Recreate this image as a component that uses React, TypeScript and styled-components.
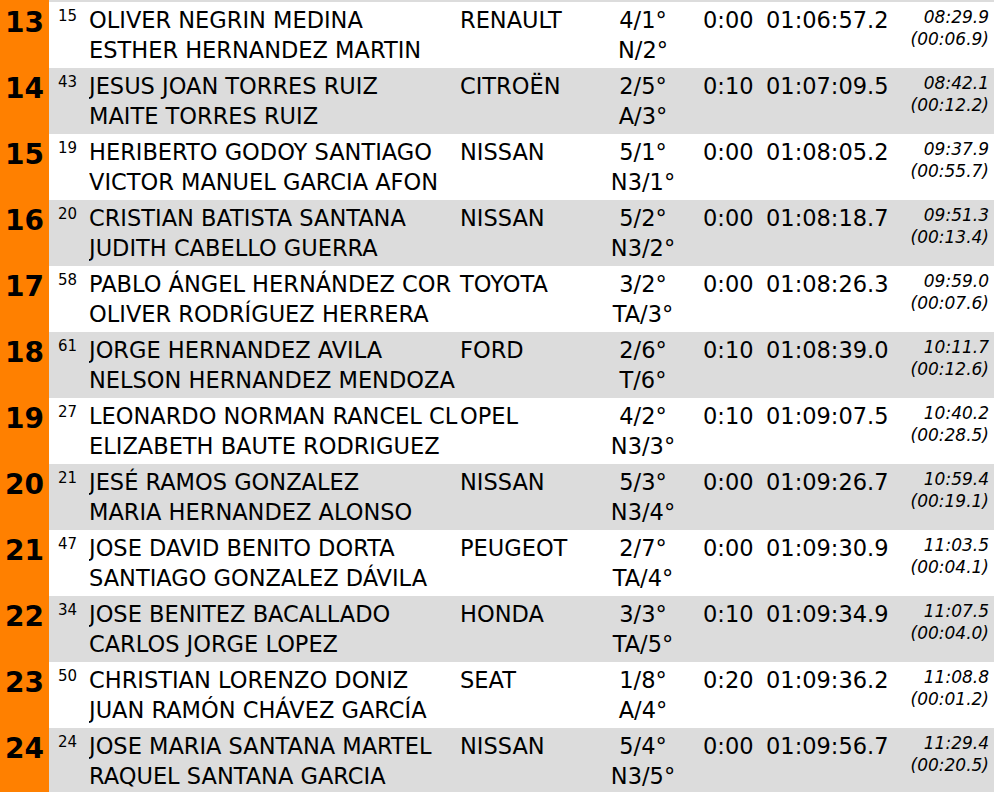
import styled, { createGlobalStyle } from 'styled-components';

type Entry = {
  pos: number;
  dorsal: number;
  driver: string;
  codriver: string;
  car: string;
  classAbs: string;
  classGroup: string;
  penalty: string;
  time: string;
  diff: string;
  prev: string;
};

const entries: Entry[] = [
  { pos: 13, dorsal: 15, driver: 'OLIVER NEGRIN MEDINA', codriver: 'ESTHER HERNANDEZ MARTIN', car: 'RENAULT', classAbs: '4/1°', classGroup: 'N/2°', penalty: '0:00', time: '01:06:57.2', diff: '08:29.9', prev: '(00:06.9)' },
  { pos: 14, dorsal: 43, driver: 'JESUS JOAN TORRES RUIZ', codriver: 'MAITE TORRES RUIZ', car: 'CITROËN', classAbs: '2/5°', classGroup: 'A/3°', penalty: '0:10', time: '01:07:09.5', diff: '08:42.1', prev: '(00:12.2)' },
  { pos: 15, dorsal: 19, driver: 'HERIBERTO GODOY SANTIAGO', codriver: 'VICTOR MANUEL GARCIA AFON', car: 'NISSAN', classAbs: '5/1°', classGroup: 'N3/1°', penalty: '0:00', time: '01:08:05.2', diff: '09:37.9', prev: '(00:55.7)' },
  { pos: 16, dorsal: 20, driver: 'CRISTIAN BATISTA SANTANA', codriver: 'JUDITH CABELLO GUERRA', car: 'NISSAN', classAbs: '5/2°', classGroup: 'N3/2°', penalty: '0:00', time: '01:08:18.7', diff: '09:51.3', prev: '(00:13.4)' },
  { pos: 17, dorsal: 58, driver: 'PABLO ÁNGEL HERNÁNDEZ COR', codriver: 'OLIVER RODRÍGUEZ HERRERA', car: 'TOYOTA', classAbs: '3/2°', classGroup: 'TA/3°', penalty: '0:00', time: '01:08:26.3', diff: '09:59.0', prev: '(00:07.6)' },
  { pos: 18, dorsal: 61, driver: 'JORGE HERNANDEZ AVILA', codriver: 'NELSON HERNANDEZ MENDOZA', car: 'FORD', classAbs: '2/6°', classGroup: 'T/6°', penalty: '0:10', time: '01:08:39.0', diff: '10:11.7', prev: '(00:12.6)' },
  { pos: 19, dorsal: 27, driver: 'LEONARDO NORMAN RANCEL CL', codriver: 'ELIZABETH BAUTE RODRIGUEZ', car: 'OPEL', classAbs: '4/2°', classGroup: 'N3/3°', penalty: '0:10', time: '01:09:07.5', diff: '10:40.2', prev: '(00:28.5)' },
  { pos: 20, dorsal: 21, driver: 'JESÉ RAMOS GONZALEZ', codriver: 'MARIA HERNANDEZ ALONSO', car: 'NISSAN', classAbs: '5/3°', classGroup: 'N3/4°', penalty: '0:00', time: '01:09:26.7', diff: '10:59.4', prev: '(00:19.1)' },
  { pos: 21, dorsal: 47, driver: 'JOSE DAVID BENITO DORTA', codriver: 'SANTIAGO GONZALEZ DÁVILA', car: 'PEUGEOT', classAbs: '2/7°', classGroup: 'TA/4°', penalty: '0:00', time: '01:09:30.9', diff: '11:03.5', prev: '(00:04.1)' },
  { pos: 22, dorsal: 34, driver: 'JOSE BENITEZ BACALLADO', codriver: 'CARLOS JORGE LOPEZ', car: 'HONDA', classAbs: '3/3°', classGroup: 'TA/5°', penalty: '0:10', time: '01:09:34.9', diff: '11:07.5', prev: '(00:04.0)' },
  { pos: 23, dorsal: 50, driver: 'CHRISTIAN LORENZO DONIZ', codriver: 'JUAN RAMÓN CHÁVEZ GARCÍA', car: 'SEAT', classAbs: '1/8°', classGroup: 'A/4°', penalty: '0:20', time: '01:09:36.2', diff: '11:08.8', prev: '(00:01.2)' },
  { pos: 24, dorsal: 24, driver: 'JOSE MARIA SANTANA MARTEL', codriver: 'RAQUEL SANTANA GARCIA', car: 'NISSAN', classAbs: '5/4°', classGroup: 'N3/5°', penalty: '0:00', time: '01:09:56.7', diff: '11:29.4', prev: '(00:20.5)' },
];

export default function App() {
  return (
    <>
      <GlobalStyle />
      <Results>
        <TopStrip>
          <PosCell />
          <StripFill />
        </TopStrip>
        {entries.map((e) => (
          <Row key={e.pos} $shaded={e.pos % 2 === 0}>
            <PosCell>{e.pos}</PosCell>
            <Dorsal>{e.dorsal}</Dorsal>
            <Crew>
              <div>{e.driver}</div>
              <div>{e.codriver}</div>
            </Crew>
            <Car>{e.car}</Car>
            <ClassCell>
              <div>{e.classAbs}</div>
              <div>{e.classGroup}</div>
            </ClassCell>
            <Penalty>{e.penalty}</Penalty>
            <Time>{e.time}</Time>
            <Diff>
              <div>{e.diff}</div>
              <div>{e.prev}</div>
            </Diff>
          </Row>
        ))}
      </Results>
    </>
  );
}

const GlobalStyle = createGlobalStyle`
  html, body {
    margin: 0;
    padding: 0;
    background: #ffffff;
    overflow: hidden;
  }

  body {
    font-family: "DejaVu Sans", Verdana, sans-serif;
    color: #000000;
  }
`;

const Results = styled.div`
  width: 994px;
  display: flex;
  flex-direction: column;
`;

const TopStrip = styled.div`
  display: grid;
  grid-template-columns: 49px 1fr;
  height: 2px;
`;

const StripFill = styled.div`
  background-color: #dcdcdc;
`;

const Row = styled.div<{ $shaded: boolean }>`
  display: grid;
  grid-template-columns: 49px 40px 371px 133px 100px 73px 127px 1fr;
  height: 66px;
  background-color: ${(p) => (p.$shaded ? '#dcdcdc' : '#ffffff')};
  font-size: 22.5px;
  line-height: 30px;
`;

const PosCell = styled.div`
  background-color: #ff8000;
  font-size: 28px;
  font-weight: bold;
  line-height: 30px;
  text-align: center;
  padding-top: 6px;
`;

const Dorsal = styled.div`
  font-size: 15px;
  line-height: 18px;
  padding: 5px 0 0 9px;
`;

const Crew = styled.div`
  padding-top: 3px;
  overflow: hidden;
  white-space: nowrap;
`;

const Car = styled.div`
  padding-top: 3px;
  white-space: nowrap;
`;

const ClassCell = styled.div`
  padding-top: 3px;
  text-align: center;
  white-space: nowrap;
`;

const Penalty = styled.div`
  padding: 3px 0 0 10px;
`;

const Time = styled.div`
  padding-top: 3px;
  white-space: nowrap;
`;

const Diff = styled.div`
  font-size: 17px;
  font-style: italic;
  line-height: 22px;
  padding: 4px 5px 0 0;
  text-align: right;
  white-space: nowrap;
`;
